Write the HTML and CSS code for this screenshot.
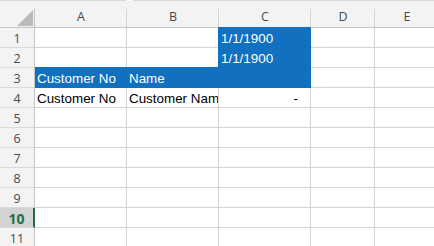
FILE: index.html
```html
<!DOCTYPE html>
<html>
<head>
<meta charset="utf-8">
<link rel="stylesheet" href="styles.css">
</head>
<body>
<div class="topline"><span class="seg-a"></span><span class="seg-gap"></span><span class="seg-b"></span></div>
<div class="sheet">
  <div class="hd corner"><svg class="tri" width="16" height="16" viewBox="0 0 16 16"><polygon points="16,0 16,16 0,16" fill="#b9b9b9"/></svg></div>
  <div class="hd col">A</div>
  <div class="hd col">B</div>
  <div class="hd col">C</div>
  <div class="hd col">D</div>
  <div class="hd col">E</div>

  <div class="rh">1</div><div class="c"></div><div class="c"></div><div class="c blue bl bt">1/1/1900</div><div class="c"></div><div class="c"></div>
  <div class="rh">2</div><div class="c"></div><div class="c"></div><div class="c blue bl">1/1/1900</div><div class="c"></div><div class="c"></div>
  <div class="rh">3</div><div class="c blue bt">Customer No</div><div class="c blue bt">Name</div><div class="c blue"></div><div class="c"></div><div class="c"></div>
  <div class="rh">4</div><div class="c">Customer No</div><div class="c">Customer Name</div><div class="c num">-</div><div class="c"></div><div class="c"></div>
  <div class="rh">5</div><div class="c"></div><div class="c"></div><div class="c"></div><div class="c"></div><div class="c"></div>
  <div class="rh">6</div><div class="c"></div><div class="c"></div><div class="c"></div><div class="c"></div><div class="c"></div>
  <div class="rh">7</div><div class="c"></div><div class="c"></div><div class="c"></div><div class="c"></div><div class="c"></div>
  <div class="rh">8</div><div class="c"></div><div class="c"></div><div class="c"></div><div class="c"></div><div class="c"></div>
  <div class="rh">9</div><div class="c"></div><div class="c"></div><div class="c"></div><div class="c"></div><div class="c"></div>
  <div class="rh sel">10</div><div class="c"></div><div class="c"></div><div class="c"></div><div class="c"></div><div class="c"></div>
  <div class="rh">11</div><div class="c"></div><div class="c"></div><div class="c"></div><div class="c"></div><div class="c"></div>
</div>
</body>
</html>
```

FILE: styles.css
```css
html, body {
  margin: 0;
  padding: 0;
  background: #ffffff;
  overflow: hidden;
}

.topline {
  display: flex;
  height: 1px;
  background: #f3f3f3;
}
.seg-a { width: 126px; background: #d9d9d9; }
.seg-gap { width: 7px; background: #fafafa; }
.seg-b { flex: 1; background: #d9d9d9; }

.sheet {
  display: grid;
  grid-template-columns: 35px 92px 92px 92px 64px 64px;
  grid-template-rows: 27px repeat(11, 20px);
  width: 439px;
  font-family: "Liberation Sans", Arial, sans-serif;
}

.hd {
  box-sizing: border-box;
  background-color: #f3f3f3;
  border-bottom: 1px solid #c4c4c4;
  background-image: linear-gradient(#d4d4d4, #d4d4d4);
  background-position: right bottom;
  background-size: 1px 18px;
  background-repeat: no-repeat;
  font-family: "Open Sans", "Noto Sans", sans-serif;
  font-size: 12.5px;
  color: #4a4a4a;
  display: flex;
  align-items: center;
  justify-content: center;
  padding-top: 5px;
}

.corner {
  justify-content: flex-end;
  align-items: flex-end;
  padding: 0 2px 1px 0;
  background-image: linear-gradient(#c4c4c4, #c4c4c4);
}
.tri { display: block; }

.rh {
  box-sizing: border-box;
  background: #f3f3f3;
  border-right: 1px solid #c4c4c4;
  border-bottom: 1px solid #dadada;
  font-family: "Open Sans", "Noto Sans", sans-serif;
  font-size: 12.5px;
  color: #4a4a4a;
  display: flex;
  align-items: center;
  justify-content: center;
  padding-top: 1px;
}

.rh.sel {
  background: #d3d3d3;
  border-right: 2px solid #1e7145;
  color: #1e7145;
  font-weight: bold;
  font-size: 14px;
}

.c {
  box-sizing: border-box;
  border-right: 1px solid #d4d4d4;
  border-bottom: 1px solid #d4d4d4;
  font-size: 13.4px;
  line-height: 19px;
  color: #000000;
  padding: 1px 0 0 2px;
  white-space: nowrap;
  overflow: hidden;
}

.c.blue {
  background: #1170c0;
  border-color: #1170c0;
  color: #ffffff;
}
.c.bl { box-shadow: -1px 0 0 #1170c0; overflow: visible; }
.c.bt { box-shadow: 0 -1px 0 #1170c0; overflow: visible; }
.c.bl.bt { box-shadow: -1px 0 0 #1170c0, 0 -1px 0 #1170c0, -1px -1px 0 #1170c0; }

.c.num {
  text-align: right;
  padding-right: 12px;
}
```
